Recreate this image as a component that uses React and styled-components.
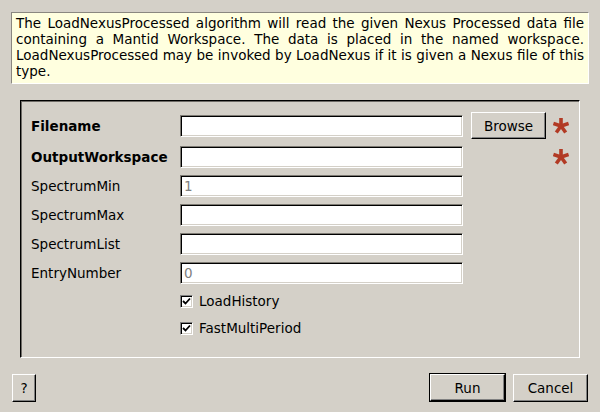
import React from "react";
import styled, { createGlobalStyle } from "styled-components";

const Global = createGlobalStyle`
  html, body { margin: 0; padding: 0; background: #d4d0c8; }
  body { font-family: "DejaVu Sans", Verdana, sans-serif; font-size: 13.5px; color: #000; }
  * { box-sizing: border-box; }
`;

const Page = styled.div`
  width: 600px;
  height: 412px;
  display: flex;
  flex-direction: column;
  padding: 12px 11px 0 11px;
`;

const Description = styled.div`
  background: #ffffdf;
  border-top: 1px solid #8a8780;
  border-left: 1px solid #8a8780;
  border-bottom: 1px solid #ffffff;
  border-right: 1px solid #ffffff;
  padding: 2px 4px 4px 4px;
  line-height: 16px;
  height: 72px;
  overflow: hidden;
`;

const Line = styled.div`
  text-align: justify;
  text-align-last: ${(p) => (p.$last ? "left" : "justify")};
  white-space: nowrap;
`;

const Frame = styled.div`
  margin: 16px 9px 0 9px;
  height: 258px;
  border-top: 1px solid #000;
  border-left: 1px solid #000;
  border-bottom: 1px solid #ffffff;
  border-right: 1px solid #ffffff;
  box-shadow: inset 1px 1px 0 #6e6b66;
  padding: 11px 0 0 10px;
  display: flex;
  flex-direction: column;
  gap: 7px;
`;

const Row = styled.div`
  display: flex;
  align-items: center;
  height: ${(p) => p.$h || 22}px;
`;

const Label = styled.div`
  width: 149px;
  font-weight: ${(p) => (p.$bold ? "bold" : "normal")};
  white-space: nowrap;
`;

const Input = styled.div`
  width: 283px;
  height: 22px;
  background: #fff;
  border-top: 1px solid #7d7a73;
  border-left: 1px solid #7d7a73;
  border-bottom: 1px solid #fff;
  border-right: 1px solid #fff;
  box-shadow: inset 1px 1px 0 #000, inset -1px -1px 0 #d4d0c8;
  padding: 0 3px;
  display: flex;
  align-items: center;
  color: #808080;
`;

const Button = styled.div`
  width: ${(p) => p.$w}px;
  height: ${(p) => p.$h || 27}px;
  display: flex;
  align-items: center;
  justify-content: center;
  background: #d4d0c8;
  border-top: 1px solid #fff;
  border-left: 1px solid #fff;
  border-bottom: 1px solid #000;
  border-right: 1px solid #000;
  box-shadow: inset -1px -1px 0 #808080;
  margin-left: ${(p) => p.$ml || 0}px;
`;

const DefaultButton = styled.div`
  width: ${(p) => p.$w}px;
  height: 29px;
  border: 1px solid #000;
  display: flex;
`;

const Asterisk = styled.div`
  width: 16px;
  margin-left: ${(p) => p.$ml || 7}px;
  display: flex;
  align-items: center;
  justify-content: center;
`;

const Check = styled.div`
  display: flex;
  align-items: center;
  gap: 6px;
  margin-left: 149px;
`;

const Box = styled.div`
  width: 13px;
  height: 13px;
  background: #fff;
  border-top: 1px solid #808080;
  border-left: 1px solid #808080;
  border-bottom: 1px solid #fff;
  border-right: 1px solid #fff;
  box-shadow: inset 1px 1px 0 #000, inset -1px -1px 0 #d4d0c8;
  display: flex;
  align-items: center;
  justify-content: center;
`;

const Footer = styled.div`
  display: flex;
  align-items: center;
  margin-top: 15px;
  padding-left: 1px;
  padding-right: 1px;
`;

const Spacer = styled.div`
  flex: 1;
`;

const Star = () => (
  <svg width="16" height="16" viewBox="0 0 16 16">
    <g fill="#b23a24">
      <rect x="6.2" y="0" width="3.6" height="8" />
      <rect x="6.2" y="0" width="3.6" height="8" transform="rotate(72 8 8)" />
      <rect x="6.2" y="0" width="3.6" height="8" transform="rotate(144 8 8)" />
      <rect x="6.2" y="0" width="3.6" height="8" transform="rotate(216 8 8)" />
      <rect x="6.2" y="0" width="3.6" height="8" transform="rotate(288 8 8)" />
    </g>
  </svg>
);

const Tick = () => (
  <svg width="9" height="9" viewBox="0 0 9 9">
    <path d="M1 4 L3.5 6.5 L8 1.5" stroke="#000" strokeWidth="1.8" fill="none" />
  </svg>
);

export default function App() {
  return (
    <>
      <Global />
      <Page>
        <Description>
          <Line>The LoadNexusProcessed algorithm will read the given Nexus Processed data file</Line>
          <Line>containing a Mantid Workspace. The data is placed in the named workspace.</Line>
          <Line>LoadNexusProcessed may be invoked by LoadNexus if it is given a Nexus file of this</Line>
          <Line $last>type.</Line>
        </Description>
        <Frame>
          <Row $h={27}>
            <Label $bold>Filename</Label>
            <Input />
            <Button $w={75} $ml={8}>Browse</Button>
            <Asterisk><Star /></Asterisk>
          </Row>
          <Row>
            <Label $bold>OutputWorkspace</Label>
            <Input />
            <Asterisk $ml={90}><Star /></Asterisk>
          </Row>
          <Row>
            <Label>SpectrumMin</Label>
            <Input>1</Input>
          </Row>
          <Row>
            <Label>SpectrumMax</Label>
            <Input />
          </Row>
          <Row>
            <Label>SpectrumList</Label>
            <Input />
          </Row>
          <Row>
            <Label>EntryNumber</Label>
            <Input>0</Input>
          </Row>
          <Row $h={20}>
            <Check><Box><Tick /></Box>LoadHistory</Check>
          </Row>
          <Row $h={20}>
            <Check><Box><Tick /></Box>FastMultiPeriod</Check>
          </Row>
        </Frame>
        <Footer>
          <Button $w={24} $h={28}>?</Button>
          <Spacer />
          <DefaultButton $w={77}>
            <Button $w={75}>Run</Button>
          </DefaultButton>
          <Button $w={75} $ml={7} $h={28}>Cancel</Button>
        </Footer>
      </Page>
    </>
  );
}
